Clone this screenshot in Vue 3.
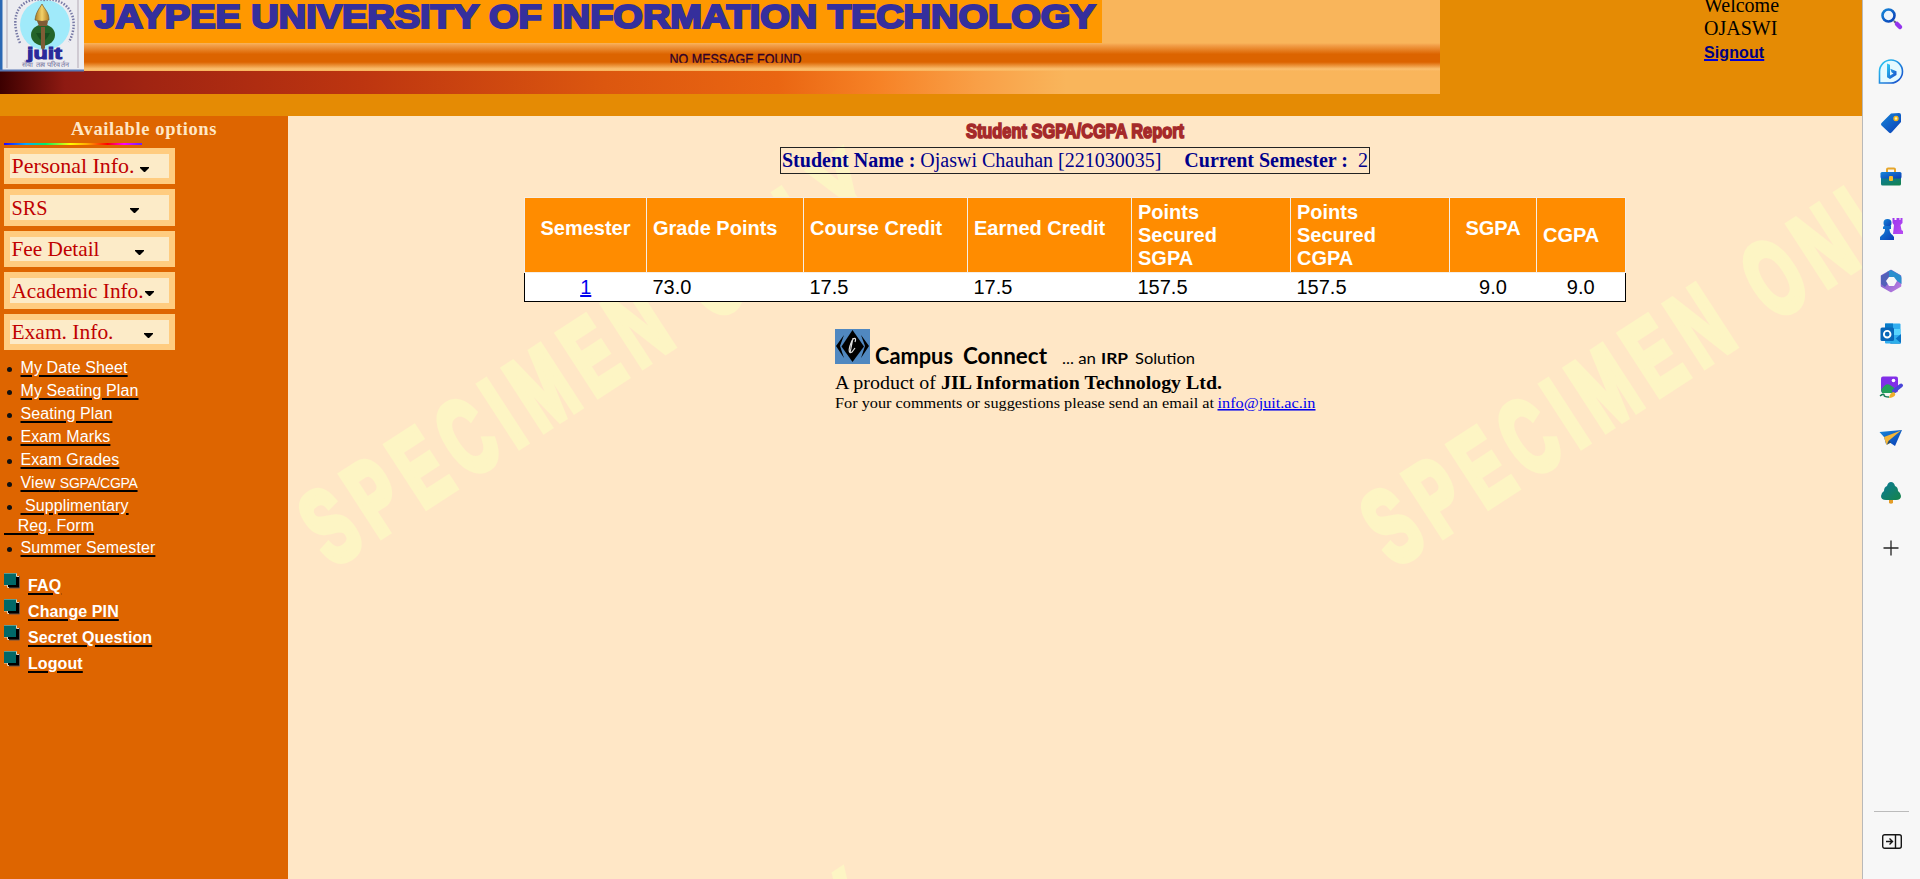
<script setup>
const menus = [
  { label: 'Personal Info.', w: 123, arrow: 136, h: 36 },
  { label: 'SRS', w: 36, arrow: 126, h: 37 },
  { label: 'Fee Detail', w: 88, arrow: 131, h: 36 },
  { label: 'Academic Info.', w: 132, arrow: 141, h: 37 },
  { label: 'Exam. Info.', w: 102, arrow: 140, h: 36 },
]
const exams = ['My Date Sheet', 'My Seating Plan', 'Seating Plan', 'Exam Marks', 'Exam Grades']
const tools = ['FAQ', 'Change PIN', 'Secret Question', 'Logout']
const marks = [[332, 568], [1394, 568], [332, 1288]]
</script>

<template>
  <div class="screen">
    <div class="page">
      <header class="top">
        <svg class="banner" width="1440" height="94" viewBox="0 0 1440 94">
          <defs>
            <linearGradient id="band" x1="0" y1="0" x2="0" y2="1">
              <stop offset="0" stop-color="#f9b55b" /><stop offset=".08" stop-color="#f3a04a" />
              <stop offset=".4" stop-color="#dc6400" /><stop offset=".68" stop-color="#dc6400" />
              <stop offset=".93" stop-color="#fbc070" /><stop offset="1" stop-color="#f9b55b" />
            </linearGradient>
            <linearGradient id="ember">
              <stop offset="0" stop-color="#3c0000" /><stop offset=".045" stop-color="#8e1a12" />
              <stop offset=".1" stop-color="#a02412" /><stop offset=".25" stop-color="#bd3510" />
              <stop offset=".42" stop-color="#dc570f" /><stop offset=".54" stop-color="#ea6612" />
              <stop offset=".61" stop-color="#f68226" /><stop offset=".68" stop-color="#f9a047" />
              <stop offset=".74" stop-color="#f9b55b" />
            </linearGradient>
            <linearGradient id="flame" x1="0" y1="0" x2="1" y2="0">
              <stop offset="0" stop-color="#a87a22" /><stop offset=".5" stop-color="#f3d26a" /><stop offset="1" stop-color="#b07a20" />
            </linearGradient>
          </defs>
          <rect width="1440" height="94" fill="#f9b55b" />
          <rect width="1102" height="44" fill="#ff9800" />
          <rect y="43" width="1440" height="28" fill="url(#band)" />
          <rect y="71" width="1440" height="23" fill="url(#ember)" />
          <rect width="84" height="71" fill="#ececf0" />
          <rect width="2.5" height="71" fill="#2b68b4" /><rect y="69.5" width="84" height="2" fill="#5877b4" />
          <path d="M7 0V68M78 0V68" stroke="#b3a9b5" />
          <circle cx="45" cy="25" r="25" fill="#a0eafa" />
          <path id="arc" d="M20 43C7 12 23-4 44 0C66-4 82 17 69 42" fill="none" stroke="#7779a5" stroke-width="2.5" stroke-dasharray="1.5 1.5" />
          <ellipse cx="43" cy="35" rx="12" ry="10.5" fill="#24642a" />
          <path d="M36 33Q43 48 50 33" fill="#174f21" />
          <path d="M35 20C36 12 39 9 42 4C45 10 49 12 49 20Q42 23 35 20Z" fill="url(#flame)" stroke="#765c2d" stroke-width=".7" />
          <path d="M37 21h11l-1 5h-8zM41 27h4v21l-2 3-2-3z" fill="#805c36" />
          <text x="27" y="59" class="juit" textLength="35" lengthAdjust="spacingAndGlyphs">juit</text>
          <text x="22" y="67" class="hindi" textLength="47" lengthAdjust="spacingAndGlyphs">सेवा तत्व परिवर्तन</text>
          <text x="94.500" y="28" class="uni" textLength="1001" lengthAdjust="spacingAndGlyphs">JAYPEE UNIVERSITY OF INFORMATION TECHNOLOGY</text>
          <svg x="660" y="50" width="160" height="12.7"><text x="9.500" y="14" class="msg" textLength="132" lengthAdjust="spacingAndGlyphs">NO MESSAGE FOUND</text></svg>
        </svg>
        <div class="user">
          <div>Welcome</div>
          <div>OJASWI</div>
          <a>Signout</a>
        </div>
      </header>

      <div class="body">
        <aside class="side">
          <h2>Available options</h2>
          <div class="rainbow"></div>
          <svg v-for="m in menus" :key="m.label" class="menu" width="171" :height="m.h">
            <rect width="171" :height="m.h" fill="#ffcc80" />
            <rect x="6" y="6" width="159" :height="m.h - 12" fill="#fcebc8" />
            <text x="7.500" :y="m.h - 11" :textLength="m.w" lengthAdjust="spacingAndGlyphs">{{ m.label }}</text>
            <path :d="`M${m.arrow} 19h9v1l-4 4h-1l-4-4z`" fill="#000" />
          </svg>
          <ul class="exams">
            <li v-for="e in exams" :key="e"><a>{{ e }}</a></li>
            <li><a>View <small>SGPA/CGPA</small></a></li>
            <li class="supp"><a>&nbsp;Supplimentary</a></li>
            <li class="reg"><a>&nbsp;&nbsp; Reg. Form</a></li>
            <li><a>Summer Semester</a></li>
          </ul>
          <ul class="tools">
            <li v-for="t in tools" :key="t">
              <svg width="16" height="16" viewBox="0 0 16 16">
                <path d="M4 3h12v12H4z" fill="#000" />
                <path d="M15.500 3v12H5" fill="none" stroke="#6a5548" />
                <path d="M0 .5h12.500v3H15M0 12h3.500v2.500H5" fill="none" stroke="#e4d5bd" />
                <path d="M0 1h12v11H0z" fill="#006868" />
                <path d="M0 .5h12.500" stroke="#5d9a8e" />
              </svg>
              <a>{{ t }}</a>
            </li>
          </ul>
        </aside>

        <main class="main">
          <svg class="mark" width="1574" height="763" viewBox="288 116 1574 763">
            <text v-for="m in marks" :key="m.join()" :transform="`translate(${m[0]} ${m[1]}) rotate(-33) scale(.6 1)`" x="0" y="0" textLength="1095">SPECIMEN ONLY</text>
          </svg>
          <svg class="heading" width="230" height="31"><text x="6" y="22" textLength="218" lengthAdjust="spacingAndGlyphs">Student SGPA/CGPA Report</text></svg>
          <div class="info">
            <b>Student Name :</b><span class="who">Ojaswi Chauhan [221030035]</span><b class="cur">Current Semester :</b><span class="num">2</span>
          </div>
          <table>
            <colgroup><col style="width:122px" /><col style="width:157px" /><col style="width:164px" /><col style="width:164px" /><col style="width:159px" /><col style="width:159px" /><col style="width:87px" /><col style="width:89px" /></colgroup>
            <thead>
              <tr>
                <th class="c up">Semester</th><th class="up">Grade Points</th><th class="up">Course Credit</th><th class="up">Earned Credit</th>
                <th>Points<br />Secured<br />SGPA</th><th>Points<br />Secured<br />CGPA</th><th class="c up">SGPA</th><th>CGPA</th>
              </tr>
            </thead>
            <tbody>
              <tr><td class="c"><a>1</a></td><td>73.0</td><td>17.5</td><td>17.5</td><td>157.5</td><td>157.5</td><td class="c">9.0</td><td class="c">9.0</td></tr>
            </tbody>
          </table>
          <footer>
            <svg width="490" height="90" viewBox="0 0 490 90">
              <rect width="35" height="35" fill="#5088c0" />
              <path d="M17.500 1L29 17.500L17.500 33L6.500 17.500Z" fill="#000" />
              <path d="M9 6L1 17L9 29L5 17ZM26 6L34 17L26 29L30 17Z" fill="#000" />
              <path d="M20 13c2-5-2-5-4 1c-3 8-2 11 1 9l3-4M18 9l-3 15" fill="none" stroke="#ddd" stroke-width="1.200" />
              <g class="comic">
                <text x="40" y="35" class="big" textLength="78" lengthAdjust="spacingAndGlyphs">Campus</text>
                <text x="128" y="35" class="big" textLength="84" lengthAdjust="spacingAndGlyphs">Connect</text>
                <text x="227" y="35" textLength="34" lengthAdjust="spacingAndGlyphs">... an</text>
                <text x="266" y="35" class="irp" textLength="27" lengthAdjust="spacingAndGlyphs">IRP</text>
                <text x="300" y="35" textLength="60" lengthAdjust="spacingAndGlyphs">Solution</text>
              </g>
              <text x="0" y="60" class="prod" textLength="101" lengthAdjust="spacingAndGlyphs">A product of</text>
              <text x="106" y="60" class="prod bold" textLength="281" lengthAdjust="spacingAndGlyphs">JIL Information Technology Ltd.</text>
              <text x="0" y="79" class="mail" textLength="379" lengthAdjust="spacingAndGlyphs">For your comments or suggestions please send an email at</text>
              <text x="382.500" y="79" class="mail link" textLength="98" lengthAdjust="spacingAndGlyphs">info@juit.ac.in</text>
            </svg>
          </footer>
        </main>
      </div>
    </div>

    <nav class="rail">
      <svg width="0" height="0" class="defs">
        <linearGradient id="blue" x1="0" y1="0" x2="1" y2="1"><stop stop-color="#1687d9" /><stop offset="1" stop-color="#0a3cb5" /></linearGradient>
        <linearGradient id="bing" x1="0" y1="0" x2="1" y2="1"><stop stop-color="#2cd0f5" /><stop offset="1" stop-color="#1746c9" /></linearGradient>
        <linearGradient id="purple" x1="0" y1="0" x2="1" y2="1"><stop stop-color="#9b35ee" /><stop offset="1" stop-color="#b94bf2" /></linearGradient>
        <linearGradient id="green" x1="0" y1="0" x2="1" y2="1"><stop stop-color="#0b7a99" /><stop offset="1" stop-color="#168449" /></linearGradient>
        <linearGradient id="lilac" x1="0" y1="0" x2="1" y2="1"><stop stop-color="#6a5ec8" /><stop offset="1" stop-color="#c07be0" /></linearGradient>
      </svg>
      <div class="icons">
        <svg viewBox="0 0 28 28"><path d="M17 17l3 3" stroke="#5a6375" stroke-width="2" /><path d="M20 20l3 3" stroke="#9535ed" stroke-width="4.500" stroke-linecap="round" /><circle cx="11.500" cy="11.500" r="6" fill="#eef5fc" stroke="url(#blue)" stroke-width="2.600" /></svg>
        <svg viewBox="0 0 28 28"><path d="M2.500 25V13.500A11.500 11.500 0 1 1 14 25Z" fill="#e4faff" stroke="url(#bing)" stroke-width="1.600" /><path d="M10 5.500l3 1.200v10.800l3.500-2-2-1.300-1.200-3.500 6.200 2.500v3.800l-6.500 4-3-1.800z" fill="url(#bing)" /></svg>
        <svg viewBox="0 0 28 28"><path d="M14 4.500L22 4Q24 4 24 6V13L15 23Q13.500 25 12 23.500L4.500 16.500Q3 15 5 13.500Z" fill="url(#blue)" /><circle cx="19" cy="9.500" r="2" fill="#fff1a8" stroke="#f6b718" stroke-width="1.400" /></svg>
        <svg viewBox="0 0 28 28"><path d="M10 9V6.500Q10 5.500 11 5.500H17Q18 5.500 18 6.500V9" fill="none" stroke="#e6a62b" stroke-width="2" /><path d="M4 15h20v6q0 1.500-1.500 1.500h-17q-1.500 0-1.500-1.500z" fill="url(#green)" /><rect x="3.500" y="9" width="21" height="6.500" rx="1.500" fill="url(#blue)" /><rect x="12" y="13" width="4" height="5" rx="1" fill="#f7b928" /></svg>
        <svg viewBox="0 0 28 28"><path d="M15.500 3h2v2h2V3h3v2h1V3h2v5l-2 2 1 5 1.500 1v3H16l1-9-1.500-2z" fill="url(#purple)" /><circle cx="10.500" cy="8" r="4" fill="url(#blue)" /><path d="M7 11h7v3h-1.500q0 4 3 6l1.500 2v3H3v-3l2-2q3-2 3-6H6v-2z" fill="url(#blue)" /></svg>
        <svg viewBox="0 0 28 28"><path d="M14 3.500L23.500 9V19L14 24.500L4.500 19V9Z" fill="url(#lilac)" stroke="url(#lilac)" stroke-width="1.500" stroke-linejoin="round" /><path d="M14 3L23 8Q24.500 9 24.500 11V17L16 11L10 10V5Z" fill="#2c8fce" /><path d="M4 9L12 4.500V15L8 20L4 17Z" fill="#5261b9" /><path d="M12 10h5l3 4-3 5h-5l-3-5z" fill="#f7f7f7" /></svg>
        <svg viewBox="0 0 28 28"><rect x="8" y="3.500" width="15.500" height="20" rx="1" fill="#31aef0" /><path d="M8 3.500h8v6H8z" fill="#087bc8" /><path d="M16 9h7.500v6H16z" fill="#58d5ff" /><path d="M13 23.500L24 14v8q0 1.500-1.500 1.500z" fill="#0872c5" /><path d="M24 23.500L14 14v8q0 1.500 1.500 1.500z" fill="#2eafea" /><rect x="3.500" y="7.500" width="13.500" height="13.500" rx="1.500" fill="#0867b8" /><circle cx="10.200" cy="14.200" r="3.300" fill="none" stroke="#fff" stroke-width="1.900" /></svg>
        <svg viewBox="0 0 28 28"><rect x="4" y="3.500" width="17" height="16" rx="2" fill="#812ee8" /><circle cx="16.500" cy="7.500" r="1.800" fill="#fff" /><path d="M4 17Q9 9 13 12L19 16V19Q19 20 17 20H5Z" fill="#24a05b" /><path d="M17 18L24 12.500" stroke="#4a45d8" stroke-width="4" stroke-linecap="round" /><path d="M12 25q1-6 5-6 3 3-1 5-2 1-4 1z" fill="#eeaf2c" /><path d="M3 23q4-3 4-1t5 2" fill="none" stroke="#167b53" stroke-width="1.500" /></svg>
        <svg viewBox="0 0 28 28"><path d="M2.500 7L25 5L18 21L12 17L9 19L7 12Z" fill="url(#blue)" /><path d="M24 5.500L7 12L9.500 20L12 15.500Z" fill="#f4b638" /><path d="M9.500 20L12 15.500L14 17.500Z" fill="#2d4859" /></svg>
        <svg viewBox="0 0 28 28"><path d="M12 20h4v4q-2 1.500-4 0z" fill="#e49d27" /><path d="M14 3q3 0 4 4 3 1 3 5 3 2 3 5 0 4-5 4H9q-5 0-5-4 0-3 3-5 0-4 3-5 1-4 4-4z" fill="url(#green)" /></svg>
        <svg viewBox="0 0 28 28"><path d="M14 6.500V21.500M6.500 14H21.500" stroke="#242424" stroke-width="1.300" /></svg>
      </div>
      <div class="rule"></div>
      <svg class="dock" width="22" height="18" viewBox="0 0 22 18"><rect x="1.700" y="1.700" width="18.600" height="13.600" rx="2" fill="none" stroke="#161616" stroke-width="1.400" /><path d="M14.500 2V15M5 8.500H11M8.500 5.500L11.500 8.500L8.500 11.500" fill="none" stroke="#161616" stroke-width="1.400" /></svg>
    </nav>
  </div>
</template>

<style>
html, body { margin: 0; background: #ffe7c6; overflow: hidden; }
</style>

<style scoped>
.screen { display: flex; width: 1920px; height: 879px; overflow: hidden; font-family: "Liberation Serif", serif; }
.page { width: 1862px; display: flex; flex-direction: column; }
.top { height: 116px; background: #e58b04; display: flex; }
.banner { display: block; flex: none; }
.uni { font: 900 33.500px "Liberation Sans", sans-serif; fill: #352f9c; stroke: #352f9c; stroke-width: 2.200px; }
.juit { font: bold 17px "Liberation Sans", sans-serif; fill: #2a2a9a; stroke: #2a2a9a; }
.hindi { font: 7px sans-serif; fill: #74719b; }
.msg { font: 15px "Liberation Sans", sans-serif; fill: #300028; stroke: #300028; stroke-width: .3px; }
.user { margin: -6px 0 0 264px; font-size: 20px; line-height: 23px; }
.user a { display: block; font: bold 16px/24px "Liberation Sans", sans-serif; color: navy; text-decoration: underline 2px #0000d8; padding-top: 1px; letter-spacing: .1px; }
.body { display: flex; height: 763px; }
.side { width: 284px; padding-left: 4px; background: #de6500; }
.side h2 { margin: 0 0 0 67px; font-size: 18.500px; line-height: 27px; height: 27px; color: #ffe7c6; white-space: nowrap; letter-spacing: .6px; }
.rainbow { width: 138px; height: 2px; margin-bottom: 3px; background: linear-gradient(90deg, #20f, #0af 16%, #0e6 30%, #ff0 48%, #fa0 60%, #f00 75%, #f0f 87%, #62f); }
.menu { display: block; margin-bottom: 5px; }
.menu text { font: 21px "Liberation Serif", serif; fill: #c00000; }
ul { list-style: none; margin: 0; padding: 0; font: 16px "Liberation Sans", sans-serif; }
.exams { letter-spacing: .1px; padding-top: 1px; }
.exams li { height: 23px; line-height: 23px; padding-left: 16.500px; position: relative; white-space: pre; }
.exams li::before { content: ""; position: absolute; left: 3px; top: 11px; width: 5px; height: 5px; border-radius: 50%; background: #111; }
.exams li.supp { height: 21px; }
.exams li.reg { height: 21px; line-height: 22px; padding-left: 0; }
.exams li.reg::before { display: none; }
.exams small { font-size: 14px; letter-spacing: -.3px; }
ul a { color: #fff; text-decoration: underline 2px #000; text-underline-offset: 2px; }
.tools { padding-top: 12.500px; font-weight: bold; letter-spacing: .1px; }
.tools li { height: 26.200px; display: flex; gap: 8px; }
.tools svg { margin-top: 1px; }
.tools a { line-height: 28px; }
.main { flex: 1; position: relative; background: #ffe7c6; display: flex; flex-direction: column; align-items: center; }
.main > * { position: relative; }
.main > .mark { position: absolute; left: 0; top: 0; }
.mark text { font: bold 106px "Liberation Sans", sans-serif; fill: #fdf5c4; stroke: #fdf5c4; stroke-width: 7px; }
.heading text { font: bold 21px "Liberation Sans", sans-serif; fill: #a52a2a; stroke: #a52a2a; stroke-width: 1.700px; }
.info { box-sizing: border-box; width: 590px; height: 27px; border: 1px solid #222; display: flex; color: #00008b; font-size: 20px; line-height: 25px; padding-left: 1px; white-space: nowrap; }
.who { margin-left: 5px; width: 243px; }
.cur { margin-left: 21px; }
.num { margin-left: 10px; }
table { width: 1102px; margin-top: 23px; border-collapse: collapse; table-layout: fixed; font: 20px/23px "Liberation Sans", sans-serif; border: 1px solid #000; background: #fff; }
th { height: 69px; padding: 3px 6px 2px; text-align: left; background: #ff8c00; color: #fff; border: 1px solid #f5eee6; white-space: nowrap; }
th.up { padding-bottom: 16px; height: 55px; }
.c { text-align: center; }
td { padding: 3px 6px 2px; height: 23px; }
td a { color: #0000ee; text-decoration: underline; }
footer { margin-top: 27px; width: 490px; padding-left: 10px; }
footer svg { display: block; }
.comic text { font: 16px Lato, sans-serif; }
.comic .big { font: bold 23px Lato, sans-serif; }
.comic .irp { font-weight: bold; }
.prod { font-size: 19.500px; }
.bold { font-weight: bold; }
.mail { font-size: 15.500px; }
.link { fill: #0000ee; text-decoration: underline; }
.rail { box-sizing: border-box; width: 58px; background: #f7f7f7; border-left: 1px solid #b9b9b9; display: flex; flex-direction: column; align-items: center; }
.defs { position: absolute; }
.icons { padding: 4px 1px 0 0; display: grid; grid-template-rows: 54px 51px 54px 52px 52px 53px 53px 52px 54px 55px 28px; }
.icons svg { width: 28px; height: 28px; display: block; }
.rule { margin-top: auto; width: 35px; height: 1px; background: #bbb; }
.dock { margin: 21px 0 28px; }
</style>
